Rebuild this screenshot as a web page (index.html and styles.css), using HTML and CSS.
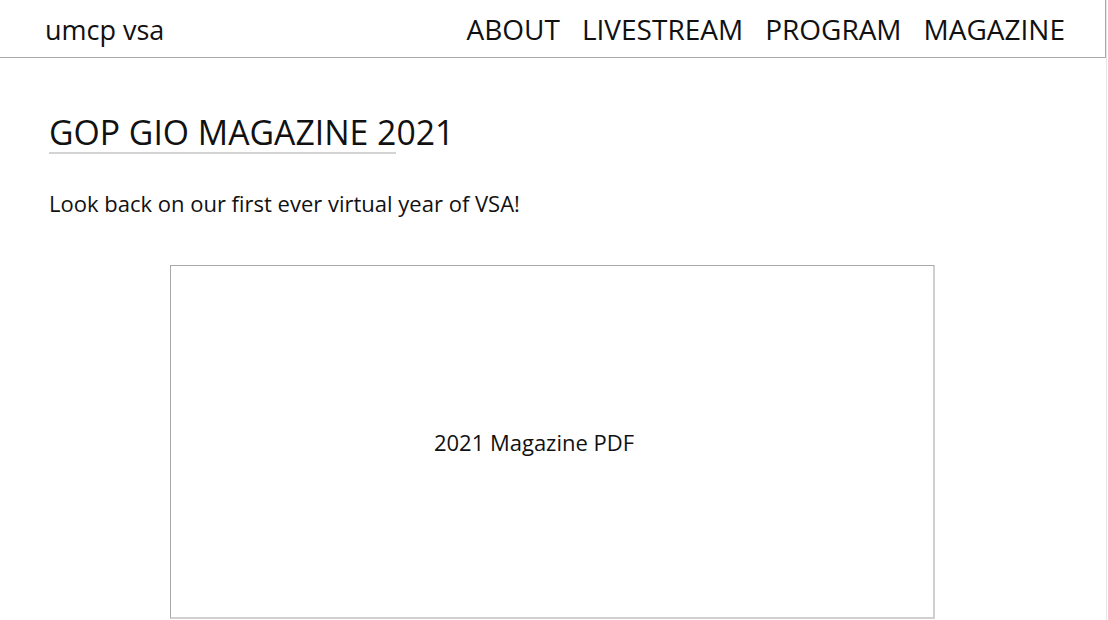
FILE: index.html
```html
<!DOCTYPE html>
<html lang="en">
<head>
<meta charset="utf-8">
<title>umcp vsa</title>
<link rel="stylesheet" href="styles.css">
</head>
<body>
<div class="page">
  <header class="topbar">
    <a class="brand" href="#">umcp vsa</a>
    <nav class="nav">
      <a href="#">ABOUT</a>
      <a href="#">LIVESTREAM</a>
      <a href="#">PROGRAM</a>
      <a href="#">MAGAZINE</a>
    </nav>
  </header>
  <main class="content">
    <h1 class="title">GOP GIO MAGAZINE 2021</h1>
    <p class="lead">Look back on our first ever virtual year of VSA!</p>
    <div class="viewer-wrap">
      <div class="viewer"><span class="viewer-label">2021 Magazine PDF</span></div>
    </div>
  </main>
</div>
</body>
</html>
```

FILE: styles.css
```css
html, body {
  margin: 0;
  padding: 0;
  background: #fff;
}
body {
  font-family: "Open Sans", "Noto Sans", sans-serif;
  color: #111;
  overflow: hidden;
}
.page {
  width: 1106px;
  height: 620px;
  border-right: 1px solid #e6e6e6;
}
.topbar {
  height: 58px;
  border-bottom: 1px solid #aaa;
  border-right: 1px solid #aaa;
  display: flex;
  align-items: center;
  justify-content: space-between;
  padding: 0 40px 0 45px;
  box-sizing: border-box;
}
.brand {
  font-size: 27px;
  color: #111;
  text-decoration: none;
  padding-top: 2px;
}
.nav {
  display: flex;
  gap: 22px;
}
.nav a {
  font-size: 28px;
  color: #111;
  text-decoration: none;
}
.content {
  padding: 0 49px;
}
.title {
  margin: 54px 0 0;
  width: 347px;
  white-space: nowrap;
  font-size: 33.75px;
  font-weight: 400;
  line-height: 40px;
  border-bottom: 2px solid #d4d4d4;
}
.lead {
  margin: 34px 0 0;
  font-size: 22px;
  line-height: 30px;
}
.viewer-wrap {
  display: flex;
  margin-top: 47px;
  padding-left: 121px;
}
.viewer {
  width: 726px;
  height: 351px;
  border-top: 1px solid #a9a9a9;
  border-left: 1px solid #a9a9a9;
  border-right: 2px solid #d0d0d0;
  border-bottom: 2px solid #d0d0d0;
  display: flex;
  align-items: center;
  justify-content: center;
  padding-right: 36px;
}
.viewer-label {
  font-size: 22px;
}
```
